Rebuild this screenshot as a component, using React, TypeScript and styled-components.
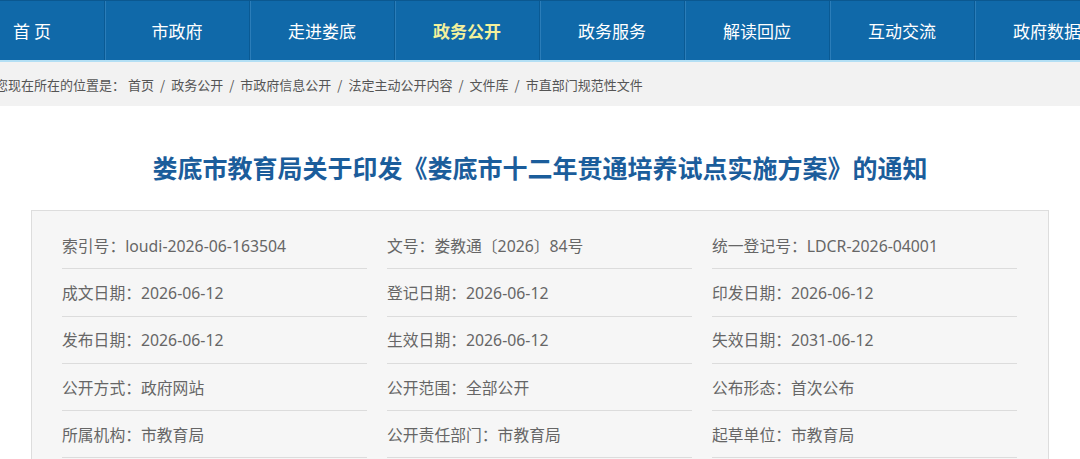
import styled, { createGlobalStyle } from "styled-components";

const GlobalStyle = createGlobalStyle`
  html, body {
    margin: 0;
    padding: 0;
    background: #ffffff;
    overflow: hidden;
  }
  body {
    font-family: "Noto Sans", "Noto Sans CJK SC", sans-serif;
  }
`;

const navItems = [
  "首 页",
  "市政府",
  "走进娄底",
  "政务公开",
  "政务服务",
  "解读回应",
  "互动交流",
  "政府数据",
];

const crumbs = [
  "首页",
  "政务公开",
  "市政府信息公开",
  "法定主动公开内容",
  "文件库",
  "市直部门规范性文件",
];

const meta: [string, string][] = [
  ["索引号", "loudi-2026-06-163504"],
  ["文号", "娄教通〔2026〕84号"],
  ["统一登记号", "LDCR-2026-04001"],
  ["成文日期", "2026-06-12"],
  ["登记日期", "2026-06-12"],
  ["印发日期", "2026-06-12"],
  ["发布日期", "2026-06-12"],
  ["生效日期", "2026-06-12"],
  ["失效日期", "2031-06-12"],
  ["公开方式", "政府网站"],
  ["公开范围", "全部公开"],
  ["公布形态", "首次公布"],
  ["所属机构", "市教育局"],
  ["公开责任部门", "市教育局"],
  ["起草单位", "市教育局"],
];

const Page = styled.div`
  width: 1080px;
  min-height: 459px;
  overflow: hidden;
`;

const NavBar = styled.nav`
  height: 62px;
  box-sizing: border-box;
  background: #1069a9;
  border-top: 1px solid #0b5890;
  border-bottom: 2px solid #b3dff4;
  overflow: hidden;
`;

const NavList = styled.ul`
  display: flex;
  margin: 0 0 0 -40px;
  padding: 0;
  list-style: none;
  height: 100%;
`;

const NavItem = styled.li<{ $active?: boolean; $first?: boolean }>`
  flex: 0 0 144px;
  display: flex;
  align-items: center;
  justify-content: center;
  font-family: "Noto Sans CJK SC", sans-serif;
  font-size: 17px;
  font-weight: ${(p) => (p.$active ? 700 : 400)};
  color: ${(p) => (p.$active ? "#f3f19c" : "#ffffff")};
  border-left: ${(p) => (p.$first ? "none" : "1px solid #0a5a94")};
  box-shadow: ${(p) => (p.$first ? "none" : "inset 1px 0 0 #2b7db9")};
`;

const Crumbs = styled.div`
  height: 44px;
  background: #f2f2f2;
  display: flex;
  align-items: center;
  margin-left: -5px;
  font-family: "Noto Sans CJK SC", sans-serif;
  font-size: 13px;
  color: #555555;
  white-space: nowrap;
`;

const CrumbLabel = styled.span`
  margin-right: 3px;
`;

const Sep = styled.span`
  margin: 0 6px;
`;

const Main = styled.main`
  padding: 0 31px;
`;

const Title = styled.h1`
  margin: 0;
  padding: 43px 0 0;
  height: 104px;
  box-sizing: border-box;
  text-align: center;
  font-family: "Noto Sans CJK SC", sans-serif;
  font-size: 25px;
  font-weight: 700;
  color: #1b5d9b;
  line-height: 36px;
`;

const InfoBox = styled.section`
  background: #f6f6f6;
  border: 1px solid #dddddd;
  padding: 11px 31px 20px 30px;
  display: grid;
  grid-template-columns: repeat(3, 1fr);
  column-gap: 20px;
`;

const InfoCell = styled.div`
  height: 46.3px;
  display: flex;
  align-items: center;
  border-bottom: 1px solid #dcdcdc;
  font-family: "Noto Sans", "Noto Sans CJK SC", sans-serif;
  font-size: 15.8px;
  color: #666666;
  white-space: nowrap;
`;

export default function App() {
  return (
    <Page>
      <GlobalStyle />
      <NavBar>
        <NavList>
          {navItems.map((name, i) => (
            <NavItem key={name} $first={i === 0} $active={name === "政务公开"}>
              {name}
            </NavItem>
          ))}
        </NavList>
      </NavBar>
      <Crumbs>
        <CrumbLabel>您现在所在的位置是：</CrumbLabel>
        {crumbs.map((c, i) => (
          <span key={c}>
            {i > 0 && <Sep>/</Sep>}
            {c}
          </span>
        ))}
      </Crumbs>
      <Main>
        <Title>娄底市教育局关于印发《娄底市十二年贯通培养试点实施方案》的通知</Title>
        <InfoBox>
          {meta.map(([k, v]) => (
            <InfoCell key={k}>
              {k}：{v}
            </InfoCell>
          ))}
        </InfoBox>
      </Main>
    </Page>
  );
}
